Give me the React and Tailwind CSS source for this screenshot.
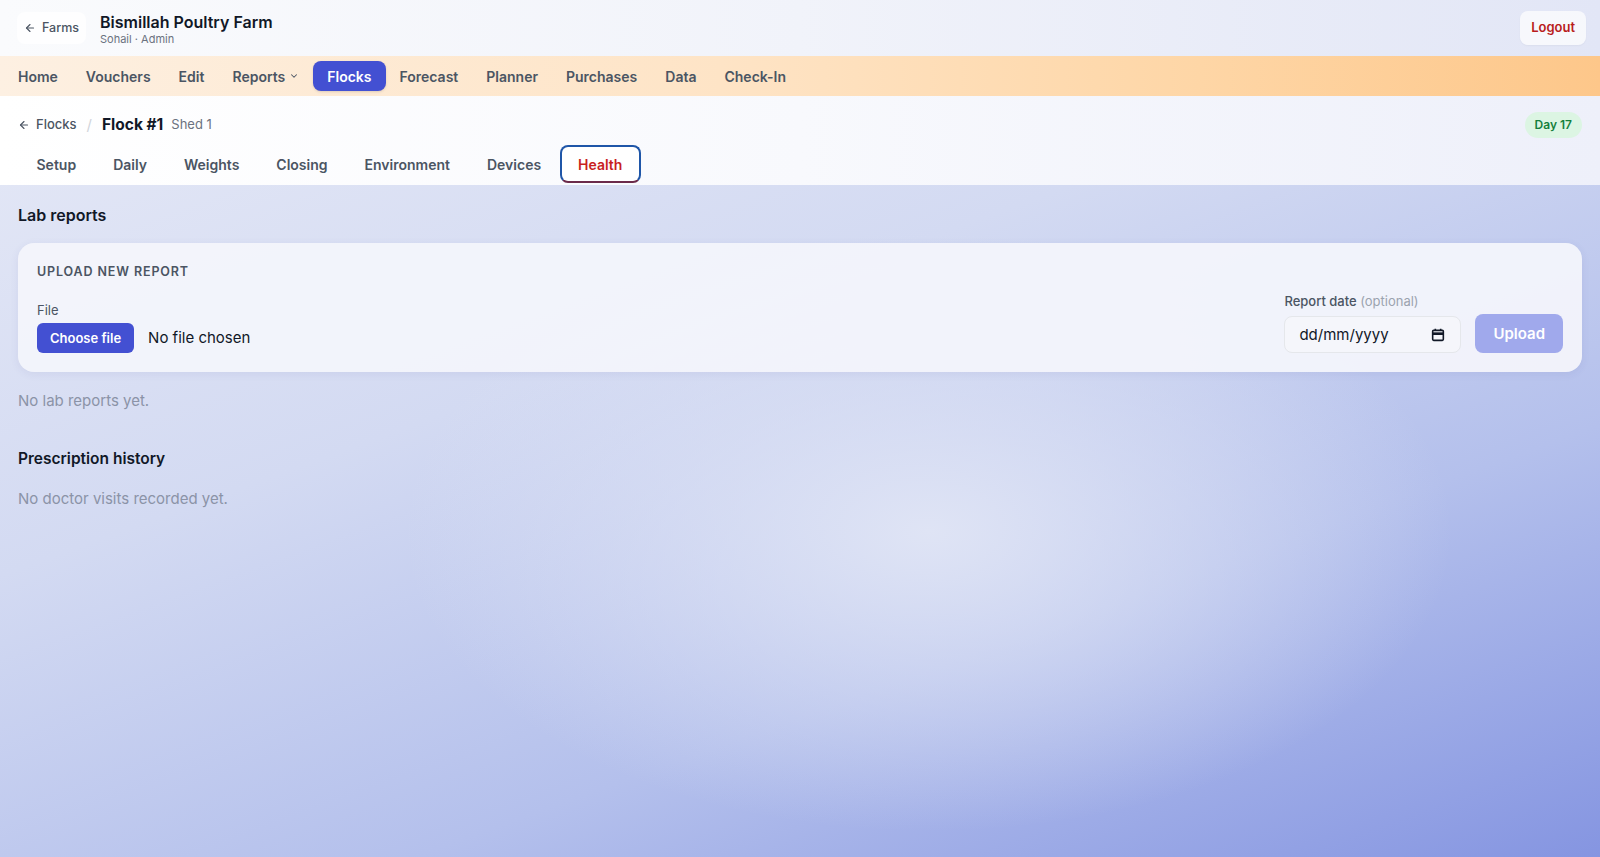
import React, { useState } from "react";

const navItems = ["Home", "Vouchers", "Edit", "Reports", "Flocks", "Forecast", "Planner", "Purchases", "Data", "Check-In"];
const tabs = ["Setup", "Daily", "Weights", "Closing", "Environment", "Devices", "Health"];

const ArrowLeft = ({ className }) => (
  <svg viewBox="0 0 24 24" fill="none" stroke="currentColor" strokeWidth="2.2" strokeLinecap="round" strokeLinejoin="round" className={className}>
    <path d="M19 12H5" />
    <path d="M12 19l-7-7 7-7" />
  </svg>
);

const App = () => {
  const [activeTab, setActiveTab] = useState("Health");

  return (
    <div
      className="min-h-screen w-full text-[#111827] font-['Inter','Liberation_Sans',sans-serif] bg-[radial-gradient(ellipse_at_58%_62%,#dfe4f5_0%,rgba(223,228,245,0)_40%),linear-gradient(160deg,#e8ebf7_0%,#d3daf2_40%,#b4c0ec_70%,#8595e1_100%)]"
    >
      {/* top header */}
      <header className="flex h-14 items-center justify-between bg-[linear-gradient(90deg,#fafbfd_0%,#f1f3fa_50%,#e2e6f6_100%)] pl-[17px] pr-[14px]">
        <div className="flex items-center gap-[14px]">
          <button className="flex h-[32px] items-center gap-1.5 rounded-lg bg-white/80 px-[7px] text-[12.5px] font-medium text-[#4b5563]">
            <ArrowLeft className="h-3 w-3" />
            Farms
          </button>
          <div className="pt-[2px] leading-tight">
            <div className="text-[16px] font-semibold text-[#111827]">Bismillah Poultry Farm</div>
            <div className="mt-[1px] text-[11px] text-[#6b7280]">Sohail · Admin</div>
          </div>
        </div>
        <button className="h-[34px] rounded-lg bg-white/70 px-[11px] text-[13px] font-semibold text-[#b91c1c] shadow-[0_1px_2px_rgba(0,0,0,0.04)]">
          Logout
        </button>
      </header>

      {/* main nav */}
      <nav className="flex h-10 items-center bg-[linear-gradient(90deg,#fdf0e2_0%,#fee4c6_45%,#fed6a6_75%,#fdc78a_100%)] px-[4px] shadow-[0_1px_2px_rgba(0,0,0,0.04)]">
        {navItems.map((item) => (
          <button
            key={item}
            className={
              item === "Flocks"
                ? "flex h-[30px] items-center rounded-lg bg-[#4350d2] px-[14px] text-[14px] font-semibold text-white shadow-sm"
                : "flex h-[30px] items-center gap-1 px-[14px] text-[14px] font-semibold text-[#4b5563]"
            }
          >
            {item}
            {item === "Reports" && (
              <svg viewBox="0 0 24 24" fill="none" stroke="currentColor" strokeWidth="2.5" strokeLinecap="round" strokeLinejoin="round" className="h-2.5 w-2.5">
                <path d="M6 9l6 6 6-6" />
              </svg>
            )}
          </button>
        ))}
      </nav>

      {/* flock header */}
      <div className="bg-[linear-gradient(90deg,#ffffff_0%,#f8f9fd_50%,#eef0fa_100%)] px-[18px] pb-[2px] pt-[16px]">
        <div className="flex items-center justify-between">
          <div className="flex items-center gap-2">
            <button className="flex items-center gap-1.5 text-[13px] font-medium text-[#4b5563]">
              <ArrowLeft className="h-3 w-3" />
              Flocks
            </button>
            <span className="mx-0.5 text-[15px] text-[#d1d5db]">/</span>
            <span className="text-[15.5px] font-bold text-[#111827]">Flock #1</span>
            <span className="text-[13px] text-[#6b7280]">Shed 1</span>
          </div>
          <span className="rounded-full bg-[#dcf5e3] px-[10px] py-[4px] text-[12px] font-semibold text-[#15803d]">
            Day 17
          </span>
        </div>
        <div className="mt-[7px] flex">
          {tabs.map((t) => (
            <button
              key={t}
              onClick={() => setActiveTab(t)}
              className={
                activeTab === t
                  ? "h-[38px] rounded-lg border-2 border-[#1f56a8] border-b-[#6b2a4a] bg-white px-[16.5px] text-[14px] font-semibold text-[#c81e1e]"
                  : "h-[38px] px-[18.5px] text-[14px] font-semibold text-[#4b5563]"
              }
            >
              {t}
            </button>
          ))}
        </div>
      </div>

      {/* content */}
      <main className="px-[18px] pt-[18px]">
        <h2 className="text-[16px] font-semibold text-[#111827]">Lab reports</h2>

        <div className="mt-[16px] rounded-2xl bg-[#f3f4fb]/95 px-[19px] pb-[19px] pt-[20px] shadow-[0_2px_8px_rgba(60,70,140,0.08)]">
          <div className="text-[12.5px] font-semibold tracking-[0.07em] text-[#4b5563]">UPLOAD NEW REPORT</div>
          <div className="mt-[10px] flex items-end justify-between">
            <div>
              <div className="text-[13px] text-[#4b5563]">File</div>
              <div className="mt-[3px] flex items-center gap-[14px]">
                <button className="h-[30px] rounded-md bg-[#4350d2] px-[13px] text-[13px] font-semibold text-white">
                  Choose file
                </button>
                <span className="text-[15px] text-[#111827]">No file chosen</span>
              </div>
            </div>
            <div className="flex items-end gap-[14px]">
              <div>
                <div className="text-[13px] font-medium text-[#4b5563]">
                  Report date <span className="font-normal text-[#9ca3af]">(optional)</span>
                </div>
                <div className="mt-[5px] flex h-[37px] w-[177px] items-center justify-between rounded-lg border border-[#e5e7eb] bg-[#f5f6fb] px-[14px]">
                  <span className="text-[15px] text-[#111827]">dd/mm/yyyy</span>
                  <svg viewBox="0 0 24 24" className="h-[16px] w-[16px]" fill="none" stroke="#111827" strokeWidth="2.4">
                    <rect x="4" y="5" width="16" height="15" rx="1.5" />
                    <path d="M4 10h16" strokeWidth="4" />
                    <path d="M8 2.5v3M16 2.5v3" />
                  </svg>
                </div>
              </div>
              <button className="h-[39px] rounded-lg bg-[#a0a9ec] px-[18px] text-[15px] font-semibold text-white">
                Upload
              </button>
            </div>
          </div>
        </div>

        <p className="mt-[18px] text-[15px] text-[#8b93a7]">No lab reports yet.</p>

        <h2 className="mt-[34px] text-[15.5px] font-semibold text-[#111827]">Prescription history</h2>
        <p className="mt-[18px] text-[15px] text-[#8b93a7]">No doctor visits recorded yet.</p>
      </main>
    </div>
  );
};

export default App;
